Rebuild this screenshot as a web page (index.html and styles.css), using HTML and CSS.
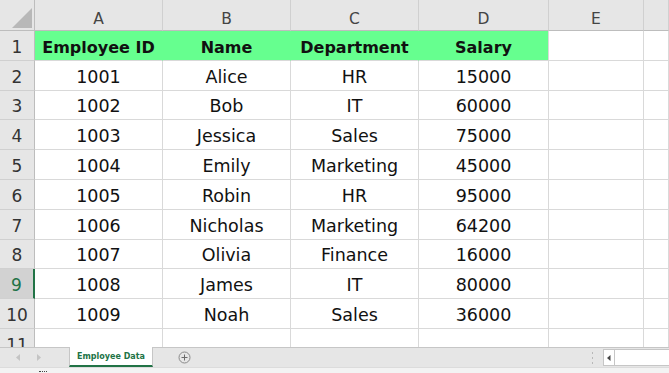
FILE: index.html
```html
<!DOCTYPE html>
<html lang="en">
<head>
  <meta charset="utf-8" />
  <meta name="viewport" content="width=device-width, initial-scale=1.0" />
  <title>Employee Data</title>
  <link rel="stylesheet" href="styles.css">
</head>
<body>
  <div class="sheet">
    <div class="grid">
      <div class="corner"><span class="corner-tri"></span></div>
      <div class="col-head">A</div>
      <div class="col-head">B</div>
      <div class="col-head">C</div>
      <div class="col-head">D</div>
      <div class="col-head">E</div>
      <div class="col-head"></div>

      <div class="row-head">1</div>
      <div class="cell fill bold">Employee ID</div>
      <div class="cell fill bold">Name</div>
      <div class="cell fill bold">Department</div>
      <div class="cell fill fill-end bold">Salary</div>
      <div class="cell"></div>
      <div class="cell"></div>

      <div class="row-head">2</div>
      <div class="cell">1001</div>
      <div class="cell">Alice</div>
      <div class="cell">HR</div>
      <div class="cell">15000</div>
      <div class="cell"></div>
      <div class="cell"></div>

      <div class="row-head">3</div>
      <div class="cell">1002</div>
      <div class="cell">Bob</div>
      <div class="cell">IT</div>
      <div class="cell">60000</div>
      <div class="cell"></div>
      <div class="cell"></div>

      <div class="row-head">4</div>
      <div class="cell">1003</div>
      <div class="cell">Jessica</div>
      <div class="cell">Sales</div>
      <div class="cell">75000</div>
      <div class="cell"></div>
      <div class="cell"></div>

      <div class="row-head">5</div>
      <div class="cell">1004</div>
      <div class="cell">Emily</div>
      <div class="cell">Marketing</div>
      <div class="cell">45000</div>
      <div class="cell"></div>
      <div class="cell"></div>

      <div class="row-head">6</div>
      <div class="cell">1005</div>
      <div class="cell">Robin</div>
      <div class="cell">HR</div>
      <div class="cell">95000</div>
      <div class="cell"></div>
      <div class="cell"></div>

      <div class="row-head">7</div>
      <div class="cell">1006</div>
      <div class="cell">Nicholas</div>
      <div class="cell">Marketing</div>
      <div class="cell">64200</div>
      <div class="cell"></div>
      <div class="cell"></div>

      <div class="row-head">8</div>
      <div class="cell">1007</div>
      <div class="cell">Olivia</div>
      <div class="cell">Finance</div>
      <div class="cell">16000</div>
      <div class="cell"></div>
      <div class="cell"></div>

      <div class="row-head active">9</div>
      <div class="cell">1008</div>
      <div class="cell">James</div>
      <div class="cell">IT</div>
      <div class="cell">80000</div>
      <div class="cell"></div>
      <div class="cell"></div>

      <div class="row-head">10</div>
      <div class="cell">1009</div>
      <div class="cell">Noah</div>
      <div class="cell">Sales</div>
      <div class="cell">36000</div>
      <div class="cell"></div>
      <div class="cell"></div>

      <div class="row-head">11</div>
      <div class="cell"></div>
      <div class="cell"></div>
      <div class="cell"></div>
      <div class="cell"></div>
      <div class="cell"></div>
      <div class="cell"></div>
    </div>
  </div>

  <div class="tabbar">
    <div class="tab-nav">
      <svg width="5" height="7" viewBox="0 0 5 7"><path d="M4 0 L0 3.5 L4 7 Z" fill="#c4c4c4"/></svg>
      <svg width="5" height="7" viewBox="0 0 5 7"><path d="M1 0 L5 3.5 L1 7 Z" fill="#c4c4c4"/></svg>
    </div>
    <div class="tab">Employee Data</div>
    <div class="tab-add">
      <svg width="13" height="13" viewBox="0 0 13 13">
        <circle cx="6.5" cy="6.5" r="5.5" fill="none" stroke="#8a8a8a" stroke-width="1"/>
        <path d="M6.5 3.5 V9.5 M3.5 6.5 H9.5" stroke="#6a6a6a" stroke-width="1"/>
      </svg>
    </div>
    <div class="spacer"></div>
    <div class="split">
      <svg width="3" height="12" viewBox="0 0 3 12">
        <rect x="1" y="0" width="1" height="2" fill="#b8b8b8"/>
        <rect x="1" y="5" width="1" height="2" fill="#b8b8b8"/>
        <rect x="1" y="10" width="1" height="2" fill="#b8b8b8"/>
      </svg>
    </div>
    <div class="hscroll">
      <div class="hscroll-btn">
        <svg width="4" height="6" viewBox="0 0 4 6"><path d="M3.5 0 L0 3 L3.5 6 Z" fill="#444"/></svg>
      </div>
      <div class="hscroll-track"></div>
    </div>
  </div>

  <div class="status">
    <span class="status-icon"></span>
  </div>
</body>
</html>
```

FILE: styles.css
```css
body {
  margin: 0;
  width: 669px;
  height: 373px;
  overflow: hidden;
  background: #fff;
  font-family: "DejaVu Sans", sans-serif;
  color: #111;
}

.sheet {
  height: 347px;
  overflow: hidden;
}

.grid {
  display: grid;
  grid-template-columns: 35px 128px 128px 128px 130px 95px 1fr;
  grid-template-rows: 31px repeat(11, 29.8px);
}

.grid > div {
  box-sizing: border-box;
}

.corner {
  background: #e6e6e6;
  border-right: 1px solid #bdbdbd;
  border-bottom: 1px solid #bdbdbd;
  position: relative;
}

.corner-tri {
  position: absolute;
  right: 2px;
  bottom: 2px;
  width: 0;
  height: 0;
  border-left: 20px solid transparent;
  border-bottom: 20px solid #b8b8b8;
}

.col-head {
  background: #e6e6e6;
  border-right: 1px solid #d0d0d0;
  border-bottom: 1px solid #bdbdbd;
  display: flex;
  align-items: flex-end;
  justify-content: center;
  padding-bottom: 1px;
  font-size: 15.5px;
  line-height: 19px;
  color: #444;
}

.row-head {
  background: #e6e6e6;
  border-right: 1px solid #bdbdbd;
  border-bottom: 1px solid #d0d0d0;
  display: flex;
  align-items: flex-end;
  justify-content: center;
  padding-bottom: 3px;
  font-size: 17px;
  line-height: 19px;
  color: #333;
}

.row-head.active {
  background: #d2d2d2;
  color: #217346;
  border-right: 2px solid #217346;
}

.cell {
  border-right: 1px solid #d9d9d9;
  border-bottom: 1px solid #d9d9d9;
  display: flex;
  align-items: flex-end;
  justify-content: center;
  padding-bottom: 3px;
  font-size: 17.5px;
  line-height: 19px;
  white-space: nowrap;
}

.fill {
  background: #66ff8f;
  border-right-color: #66ff8f;
}

.fill-end {
  border-right-color: #d9d9d9;
}

.bold {
  font-size: 16px;
  font-weight: bold;
}

.tabbar {
  height: 20px;
  box-sizing: border-box;
  border-top: 1px solid #c6c6c6;
  background: #e6e6e6;
  display: flex;
  align-items: stretch;
}

.tab-nav {
  width: 69px;
  display: flex;
  align-items: center;
  gap: 15px;
  padding-left: 16px;
  box-sizing: border-box;
}

.tab {
  width: 84px;
  box-sizing: border-box;
  margin-top: -1px;
  background: #fff;
  border-left: 1px solid #c6c6c6;
  border-right: 1px solid #c6c6c6;
  border-bottom: 2px solid #217346;
  display: flex;
  align-items: center;
  justify-content: center;
  font-size: 8px;
  font-weight: bold;
  color: #217346;
}

.tab-add {
  width: 62px;
  display: flex;
  align-items: center;
  justify-content: center;
}

.spacer {
  flex: 1;
}

.split {
  width: 14px;
  display: flex;
  align-items: center;
  justify-content: center;
  margin-right: 4px;
}

.hscroll {
  width: 66px;
  display: flex;
  padding: 1px 0 1px;
  box-sizing: border-box;
}

.hscroll-btn {
  width: 10px;
  background: #fff;
  border: 1px solid #c6c6c6;
  display: flex;
  align-items: center;
  justify-content: center;
}

.hscroll-track {
  flex: 1;
  background: #fff;
  border-top: 1px solid #c6c6c6;
  border-bottom: 1px solid #c6c6c6;
}

.status {
  height: 6px;
  background: #f3f3f3;
  border-top: 1px solid #dcdcdc;
  position: relative;
}

.status-icon {
  position: absolute;
  left: 39px;
  top: 3px;
  width: 8px;
  height: 2px;
  border-top: 1px dotted #444;
}
```
